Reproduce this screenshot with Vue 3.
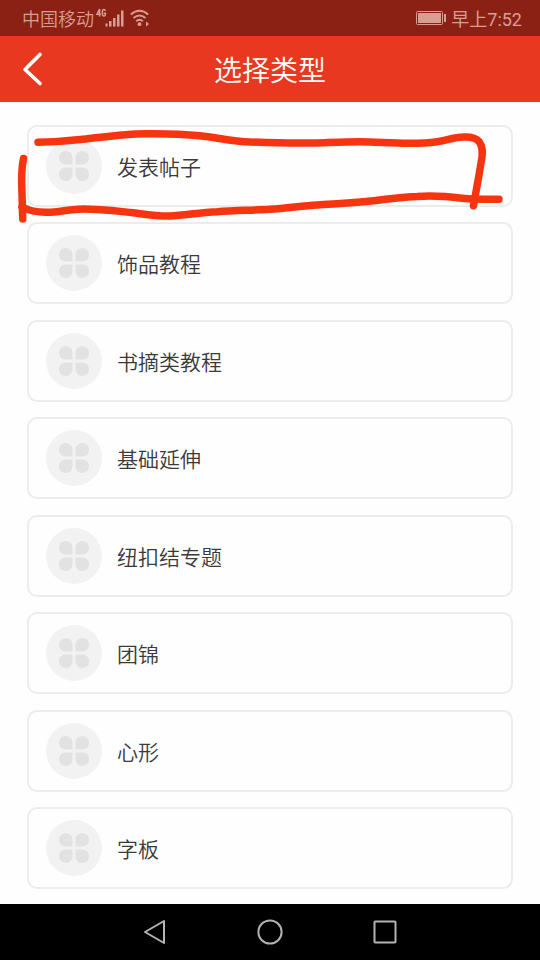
<script setup>
const types = ['发表帖子', '饰品教程', '书摘类教程', '基础延伸', '纽扣结专题', '团锦', '心形', '字板']
</script>

<template>
  <div class="screen">
    <div class="status">
      <div class="status-group">
        <span>中国移动</span>
        <svg class="signal" width="30" height="24" viewBox="0 0 30 24" aria-hidden="true">
          <g fill="none" stroke="currentColor" stroke-width="1.500">
            <path d="M3.600 10.500V3L1 8.200h3.800M9.400 4.800C9 3 6.400 3 6.400 5.500v3c0 2 3 2 3 0V7.200H7.800" />
          </g>
          <path fill="currentColor" d="M9.500 17.500h2v3h-2zM13 15h2.500v5.500h-2.500zM17 12h2.500v8.500h-2.500zM21 8.500h2.500v12h-2.500zM25 4.500h2.500v16h-2.500z" />
        </svg>
        <svg class="wifi" width="22" height="20" viewBox="0 0 22 20" aria-hidden="true">
          <g fill="none" stroke="currentColor" stroke-width="1.900">
            <path d="M.8 6.500Q9.500-.8 18.200 6.500M3.500 10Q9.500 5 15.500 10M6.200 13.200Q9.500 10.500 12.800 13.200" />
          </g>
          <circle cx="9.500" cy="16.200" r="1.900" fill="currentColor" />
          <path fill="currentColor" d="M16 13.500l3 2.500-3 2.500z" />
        </svg>
      </div>
      <div class="status-group">
        <svg class="battery" width="31" height="16" viewBox="0 0 31 16" aria-hidden="true">
          <rect x=".5" y="1.500" width="26" height="13" rx="1" fill="none" stroke="currentColor" stroke-width="1" />
          <rect x="2" y="3" width="23" height="10" fill="currentColor" />
          <rect x="28" y="4" width="2" height="8" fill="currentColor" />
        </svg>
        <span class="time">早上7:52</span>
      </div>
    </div>

    <header class="header">
      <button class="back" type="button" aria-label="返回">
        <svg width="22" height="36" viewBox="0 0 22 36" aria-hidden="true">
          <path d="M18 3.500L3 18.500L18 32.500" fill="none" stroke="currentColor" stroke-width="3.600" stroke-linecap="round" stroke-linejoin="round" />
        </svg>
      </button>
      <h1>选择类型</h1>
    </header>

    <main class="list">
      <button v-for="name in types" :key="name" class="card" type="button">
        <span class="badge">
          <svg width="32" height="32" viewBox="0 0 32 32" aria-hidden="true">
            <path fill="#e2e2e2" d="M14.500 14.500H7.500A6.800 6.800 0 1 1 14.500 7.500zM17.500 14.500V7.500A6.800 6.800 0 1 1 24.500 14.500zM14.500 17.500V24.500A6.800 6.800 0 1 1 7.500 17.500zM17.500 17.500H24.500A6.800 6.800 0 1 1 17.500 24.500z" />
          </svg>
        </span>
        <span>{{ name }}</span>
      </button>
      <svg class="marker" viewBox="0 102 540 122" preserveAspectRatio="none" aria-hidden="true">
        <g fill="none" stroke="#f73410" stroke-width="7.500" stroke-linecap="round" stroke-linejoin="round">
          <path d="M38 142.300C53 142 68 141 83 139.300C104 137 125 133.500 147 133.700C165 133.500 183 134 200 135.700C217 137.500 233 141.700 250 142C272 142.500 295 143.500 317 143C331 142.500 346 141.700 360 141.700C377 141.800 393 143.500 410 143.300C419 143.300 428 143 437 141.700C446 140.300 455 137 463 137C471 136.500 476 138 479 141.500C483 147 482.500 152 482 157L479 175L473.500 205.700" />
          <path d="M23.500 158.500C21 170 21.300 180 22 194L22.700 219" />
          <path d="M22 207C30 211 38 212.500 47 212.300C59 212 71 209 83 209C100 209 116 211 133 212.700C147 214.500 160 216.500 170 216C186 215 201 212.300 217 211.700C235 210.500 252 210.300 270 209.300C286 208.500 301 206 317 205C338 203.500 359 202.500 380 200C393 198.500 405 196.700 417 196.500C433 195.300 448 196.500 462 198.200C474 199.500 487 199.300 499 199.300" />
        </g>
      </svg>
    </main>

    <nav class="nav">
      <button type="button" aria-label="返回上一页">
        <svg width="28" height="28" viewBox="0 0 28 28" aria-hidden="true">
          <path d="M4 14L23 3V25z" />
        </svg>
      </button>
      <button type="button" aria-label="主屏幕">
        <svg width="28" height="28" viewBox="0 0 28 28" aria-hidden="true">
          <circle cx="14" cy="14" r="11.600" />
        </svg>
      </button>
      <button type="button" aria-label="最近任务">
        <svg width="28" height="28" viewBox="0 0 28 28" aria-hidden="true">
          <rect x="3.500" y="3.500" width="21" height="21" rx=".8" />
        </svg>
      </button>
    </nav>
  </div>
</template>

<style>
body {
  background: #fefefe;
}
</style>

<style scoped>
.screen {
  min-height: 100vh;
  display: flex;
  flex-direction: column;
  background: #fefefe;
  font-family: Roboto, "Noto Sans CJK SC", sans-serif;
  font-weight: 350;
}
svg {
  display: block;
}
button {
  font: inherit;
  color: inherit;
  background: none;
  border: 0;
  padding: 0;
}
.status {
  height: 36px;
  padding: 0 18px 0 22px;
  display: flex;
  align-items: center;
  justify-content: space-between;
  background: #8b2114;
  color: #d99d94;
  font-size: 18px;
}
.status-group {
  display: flex;
  align-items: center;
  gap: 4px;
}
.time {
  font-weight: 400;
}
.signal {
  margin-left: -2px;
}
.header {
  height: 66px;
  padding: 0 22px;
  display: grid;
  grid-template-columns: 22px 1fr 22px;
  align-items: center;
  background: #e83920;
  color: #fff;
}
.header h1 {
  margin: 0;
  padding-top: 6px;
  font-size: 28px;
  line-height: 40px;
  font-weight: inherit;
  text-align: center;
}
.list {
  position: relative;
  flex: 1;
  padding: 23px 27px 15px;
  display: flex;
  flex-direction: column;
  justify-content: space-between;
  gap: 14px;
}
.card {
  height: 82px;
  padding: 0 17px;
  display: flex;
  align-items: center;
  gap: 15px;
  border: 2px solid #ececec;
  border-radius: 10px;
  color: #3a3a3a;
  font-size: 21px;
  text-align: left;
}
.badge {
  width: 56px;
  height: 56px;
  display: grid;
  place-items: center;
  border-radius: 50%;
  background: #f2f2f2;
}
.marker {
  position: absolute;
  top: 0;
  left: 0;
  width: 100%;
  height: 122px;
  pointer-events: none;
}
.nav {
  height: 56px;
  display: flex;
  align-items: center;
  justify-content: center;
  gap: 87px;
  background: #000;
}
.nav svg {
  fill: none;
  stroke: #b4b4b4;
  stroke-width: 2;
  stroke-linejoin: round;
}
</style>
